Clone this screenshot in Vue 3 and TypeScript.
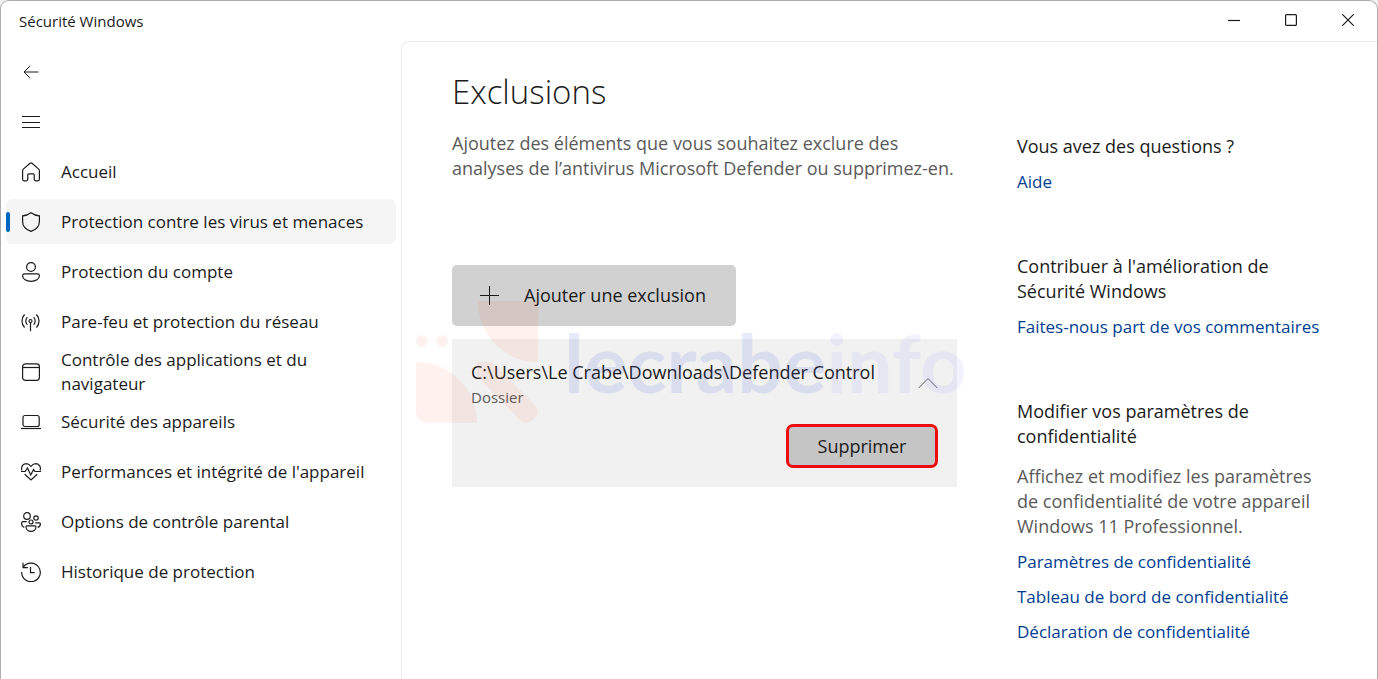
<script setup lang="ts">
import { ref } from 'vue'

interface NavItem {
  icon: string
  label: string
}

const navItems: NavItem[] = [
  { icon: 'home', label: 'Accueil' },
  { icon: 'shield', label: 'Protection contre les virus et menaces' },
  { icon: 'account', label: 'Protection du compte' },
  { icon: 'network', label: 'Pare-feu et protection du réseau' },
  { icon: 'app', label: 'Contrôle des applications et du navigateur' },
  { icon: 'device', label: 'Sécurité des appareils' },
  { icon: 'health', label: "Performances et intégrité de l'appareil" },
  { icon: 'family', label: 'Options de contrôle parental' },
  { icon: 'history', label: 'Historique de protection' },
]

const selected = ref(1)
const expanded = ref(true)
</script>

<template>
  <div class="window">
    <header class="titlebar">
      <span class="title">Sécurité Windows</span>
      <div class="controls">
        <button type="button" aria-label="Réduire">
          <svg width="12" height="12" viewBox="0 0 12 12"><path d="M0 6.5h12" /></svg>
        </button>
        <button type="button" aria-label="Agrandir">
          <svg width="12" height="12" viewBox="0 0 12 12"><rect x=".6" y=".6" width="10.8" height="10.8" rx="1" /></svg>
        </button>
        <button type="button" aria-label="Fermer">
          <svg width="12" height="12" viewBox="0 0 12 12"><path d="M.3.3l11.4 11.4M11.7.3L.3 11.7" /></svg>
        </button>
      </div>
    </header>

    <div class="body">
      <nav class="sidebar">
        <button type="button" class="row" aria-label="Retour">
          <svg class="icon thin" viewBox="0 0 20 20"><path d="M17.5 10H3M9.3 3.8L3 10l6.3 6.2" /></svg>
        </button>
        <button type="button" class="row" aria-label="Menu de navigation">
          <svg class="icon thin" viewBox="0 0 20 20"><path d="M1 4.500h18M1 10.500h18M1 15.500h18" /></svg>
        </button>
        <a
          v-for="(item, i) in navItems"
          :key="item.icon"
          href="#"
          class="row"
          :class="{ active: i === selected }"
          @click.prevent="selected = i"
        >
          <svg class="icon" viewBox="0 0 20 20" aria-hidden="true">
            <path v-if="item.icon === 'home'" d="M1.600 8.600c0-.6.3-1.100.7-1.500L9 1.200c.6-.5 1.400-.5 2 0l6.700 5.900c.4.4.7.9.7 1.500v8.700c0 .9-.7 1.500-1.500 1.500h-2.200c-.8 0-1.500-.6-1.500-1.500v-4.600c0-.5-.4-.9-.9-.9H7.700c-.5 0-.9.4-.9.9v4.600c0 .9-.7 1.500-1.500 1.500H3.100c-.8 0-1.500-.6-1.500-1.500z" />
            <path v-else-if="item.icon === 'shield'" d="M10 .8c2.500 1.900 5.200 2.900 8.400 3.100v5.600c0 4.800-2.900 8-8.400 9.900-5.500-1.900-8.400-5.100-8.400-9.900V3.900C4.800 3.700 7.500 2.700 10 .8z" />
            <template v-else-if="item.icon === 'account'">
              <circle cx="10" cy="5" r="4.400" />
              <path d="M3.500 11.900h13c1.100 0 1.900.8 1.900 1.800 0 3.400-3.700 5.700-8.400 5.700s-8.400-2.300-8.400-5.700c0-1 .8-1.800 1.900-1.800z" />
            </template>
            <template v-else-if="item.icon === 'network'">
              <circle cx="9.500" cy="9" r="1.500" />
              <path d="M9.500 10.500v8.800M3.600 2.500c-3.500 3.600-3.500 9.400 0 13M6.300 5.200c-2 2.100-2 5.500 0 7.600M15.400 2.500c3.500 3.600 3.500 9.400 0 13M12.700 5.200c2 2.100 2 5.500 0 7.600" />
            </template>
            <template v-else-if="item.icon === 'app'">
              <rect x="1.600" y="1.800" width="16.800" height="16.600" rx="2.800" />
              <path d="M1.600 5.500h16.800" />
            </template>
            <template v-else-if="item.icon === 'device'">
              <rect x="2" y="3.500" width="16.200" height="11" rx="2" />
              <path d="M0 16.500h20" />
            </template>
            <template v-else-if="item.icon === 'health'">
              <path d="M1 8.500C-.2 5.300 1.600 1.700 5 1.600c2.200 0 3.600 1 5 2.700 1.400-1.700 2.800-2.700 5-2.700 3.400.1 5.200 3.700 4 6.900" />
              <path d="M0 9.500h4.200l2.300-3.500 3.200 7 2.900-5.500 1.400 2h6M3.700 12.300l6.300 5.700 6.300-5.700" />
            </template>
            <template v-else-if="item.icon === 'family'">
              <circle cx="6" cy="4" r="3.300" />
              <circle cx="15" cy="6" r="2.200" />
              <circle cx="10" cy="10" r="2" />
              <path d="M5.800 13.800h8.400c.5 0 .8.400.8.900 0 2.600-2.100 4.700-5 4.700s-5-2.100-5-4.700c0-.5.3-.9.800-.9zM5.700 9.700H2.200C1.300 9.700.6 10.300.6 11.200c0 2 .8 3.500 2.700 4.200M14.300 10.800h4c.7 0 1.100.5 1.100 1.200 0 1.600-1 2.900-2.700 3.400" />
            </template>
            <template v-else>
              <path d="M2.200 5.300A9.300 9.300 0 1 1 .7 10M2 .8v4.900h5M9.500 5v5.700h4.200" />
            </template>
          </svg>
          <span class="label">{{ item.label }}</span>
        </a>
      </nav>

      <main class="content">
        <section class="primary">
          <h1>Exclusions</h1>
          <p class="lead">Ajoutez des éléments que vous souhaitez exclure des analyses de l’antivirus Microsoft Defender ou supprimez-en.</p>
          <button type="button" class="add">
            <svg width="20" height="20" viewBox="0 0 20 20" aria-hidden="true"><path d="M10.500 0v19M1 9.500h19" /></svg>
            <span>Ajouter une exclusion</span>
          </button>

          <div class="card">
            <button type="button" class="entry" :aria-expanded="expanded" @click="expanded = !expanded">
              <span class="names">
                <span class="path">C:\Users\Le Crabe\Downloads\Defender Control</span>
                <span class="kind">Dossier</span>
              </span>
              <svg width="20" height="12" viewBox="0 0 20 12" aria-hidden="true"><path d="M.7 11L10 1.500l9.300 9.500" /></svg>
            </button>
            <div v-if="expanded" class="actions">
              <button type="button" class="remove">Supprimer</button>
            </div>
          </div>

          <div class="watermark" aria-hidden="true">
            <svg width="124" height="124" viewBox="0 0 124 124">
              <path d="M62 1h60v61C88 62 62 35 62 1z" />
              <circle cx="6" cy="41" r="6" />
              <circle cx="26" cy="41" r="6" />
              <path d="M0 62c34 0 61 27 61 61H12c-7 0-12-5-12-12z" />
              <path d="M61 62h15l43 43c7 9-4 22-14 16L61 76z" />
            </svg>
            <span class="brand">lecrabe<span class="brand-light">info</span></span>
          </div>
        </section>

        <aside class="help">
          <section>
            <h2>Vous avez des questions ?</h2>
            <a href="#">Aide</a>
          </section>
          <section>
            <h2>Contribuer à l'amélioration de Sécurité Windows</h2>
            <a href="#">Faites-nous part de vos commentaires</a>
          </section>
          <section>
            <h2>Modifier vos paramètres de confidentialité</h2>
            <p>Affichez et modifiez les paramètres de confidentialité de votre appareil Windows 11 Professionnel.</p>
            <a href="#">Paramètres de confidentialité</a>
            <a href="#">Tableau de bord de confidentialité</a>
            <a href="#">Déclaration de confidentialité</a>
          </section>
        </aside>
      </main>
    </div>
  </div>
</template>

<style>
body {
  background: #f0f0f0;
}
</style>

<style scoped>
.window {
  box-sizing: border-box;
  min-height: 100vh;
  display: flex;
  flex-direction: column;
  border: 1px solid #adadad;
  border-bottom: 0;
  border-radius: 9px 9px 0 0;
  background: #fff;
  color: #1b1b1b;
  font-family: "Open Sans", "Noto Sans", sans-serif;
  font-size: 17px;
  line-height: 25px;
}
button {
  padding: 0;
  border: 0;
  background: none;
  color: inherit;
  font: inherit;
  text-align: left;
}
a {
  text-decoration: none;
}
h1, h2, p {
  margin: 0;
  font-weight: 400;
}
svg {
  flex: none;
  fill: none;
  stroke: #1b1b1b;
}
.titlebar {
  display: flex;
  justify-content: space-between;
  height: 40px;
}
.title {
  padding-left: 18px;
  font-size: 15px;
  line-height: 41px;
}
.controls {
  display: flex;
  padding-right: 1px;
}
.controls button {
  display: flex;
  align-items: center;
  justify-content: center;
  width: 57px;
  height: 38px;
}
.controls svg {
  stroke-width: 1.2;
}
.body {
  flex: 1;
  display: flex;
}
.sidebar {
  flex: none;
  box-sizing: border-box;
  width: 400px;
  padding: 8px 5px;
  display: flex;
  flex-direction: column;
  gap: 5px;
}
.row {
  position: relative;
  display: flex;
  align-items: center;
  gap: 20px;
  height: 45px;
  padding-left: 15px;
  border-radius: 6px;
  color: inherit;
}
.active {
  background: #f5f5f5;
}
.active::before {
  content: "";
  position: absolute;
  left: 0;
  width: 4px;
  height: 20px;
  border-radius: 2px;
  background: #0067c0;
}
.icon {
  width: 20px;
  height: 20px;
  stroke-width: 1.2;
}
.thin {
  stroke-width: 1;
}
.label {
  max-width: 310px;
  line-height: 24px;
}
.content {
  flex: 1;
  display: flex;
  gap: 60px;
  padding: 26px 48px 30px 50px;
  border: 1px solid #ebebeb;
  border-width: 1px 0 0 1px;
  border-top-left-radius: 8px;
}
.primary {
  position: relative;
  flex: 0 1 505px;
}
h1 {
  margin-bottom: 15px;
  font-size: 33px;
  font-weight: 300;
  line-height: 48px;
}
.lead {
  color: #5a5a5a;
  font-size: 18px;
}
.add {
  display: flex;
  align-items: center;
  gap: 25px;
  height: 61px;
  margin-top: 84px;
  padding: 0 30px 0 27px;
  border-radius: 5px;
  background: #d1d1d1;
  font-size: 18px;
}
.card {
  margin-top: 13px;
  padding: 21px 19px 19px;
  background: #f1f1f1;
}
.entry {
  display: flex;
  align-items: center;
  justify-content: space-between;
  width: 100%;
}
.entry svg {
  margin-bottom: 4px;
  stroke: #5a5a5a;
}
.names {
  display: flex;
  flex-direction: column;
}
.path {
  font-size: 18px;
  line-height: 25px;
}
.kind {
  color: #5a5a5a;
  font-size: 15px;
  line-height: 24px;
}
.actions {
  display: flex;
  justify-content: flex-end;
  margin-top: 15px;
}
.remove {
  box-sizing: border-box;
  width: 152px;
  height: 44px;
  border: 3px solid #ec0c0c;
  border-radius: 7px;
  background: #c5c5c5;
  font-size: 18px;
  text-align: center;
}
.watermark {
  position: absolute;
  top: 232px;
  left: -36px;
  display: flex;
  align-items: center;
  gap: 24px;
  pointer-events: none;
}
.watermark svg {
  fill: rgba(255, 85, 35, 0.08);
  stroke: none;
}
.brand {
  color: rgba(60, 80, 215, 0.12);
  font-family: Lato, sans-serif;
  font-size: 81px;
  font-weight: 700;
  line-height: 120px;
}
.brand-light {
  color: rgba(120, 110, 255, 0.09);
}
.help {
  flex: 0 1 310px;
  display: flex;
  flex-direction: column;
  gap: 60px;
  padding-top: 66px;
}
.help section {
  display: flex;
  flex-direction: column;
  align-items: flex-start;
  gap: 10px;
}
h2 {
  font-size: 18px;
  line-height: 25px;
}
.help h2 {
  max-width: 290px;
}
.help p {
  max-width: 300px;
  margin-top: 5px;
  color: #5a5a5a;
  font-size: 18px;
}
.help a {
  color: #003e92;
}
</style>
